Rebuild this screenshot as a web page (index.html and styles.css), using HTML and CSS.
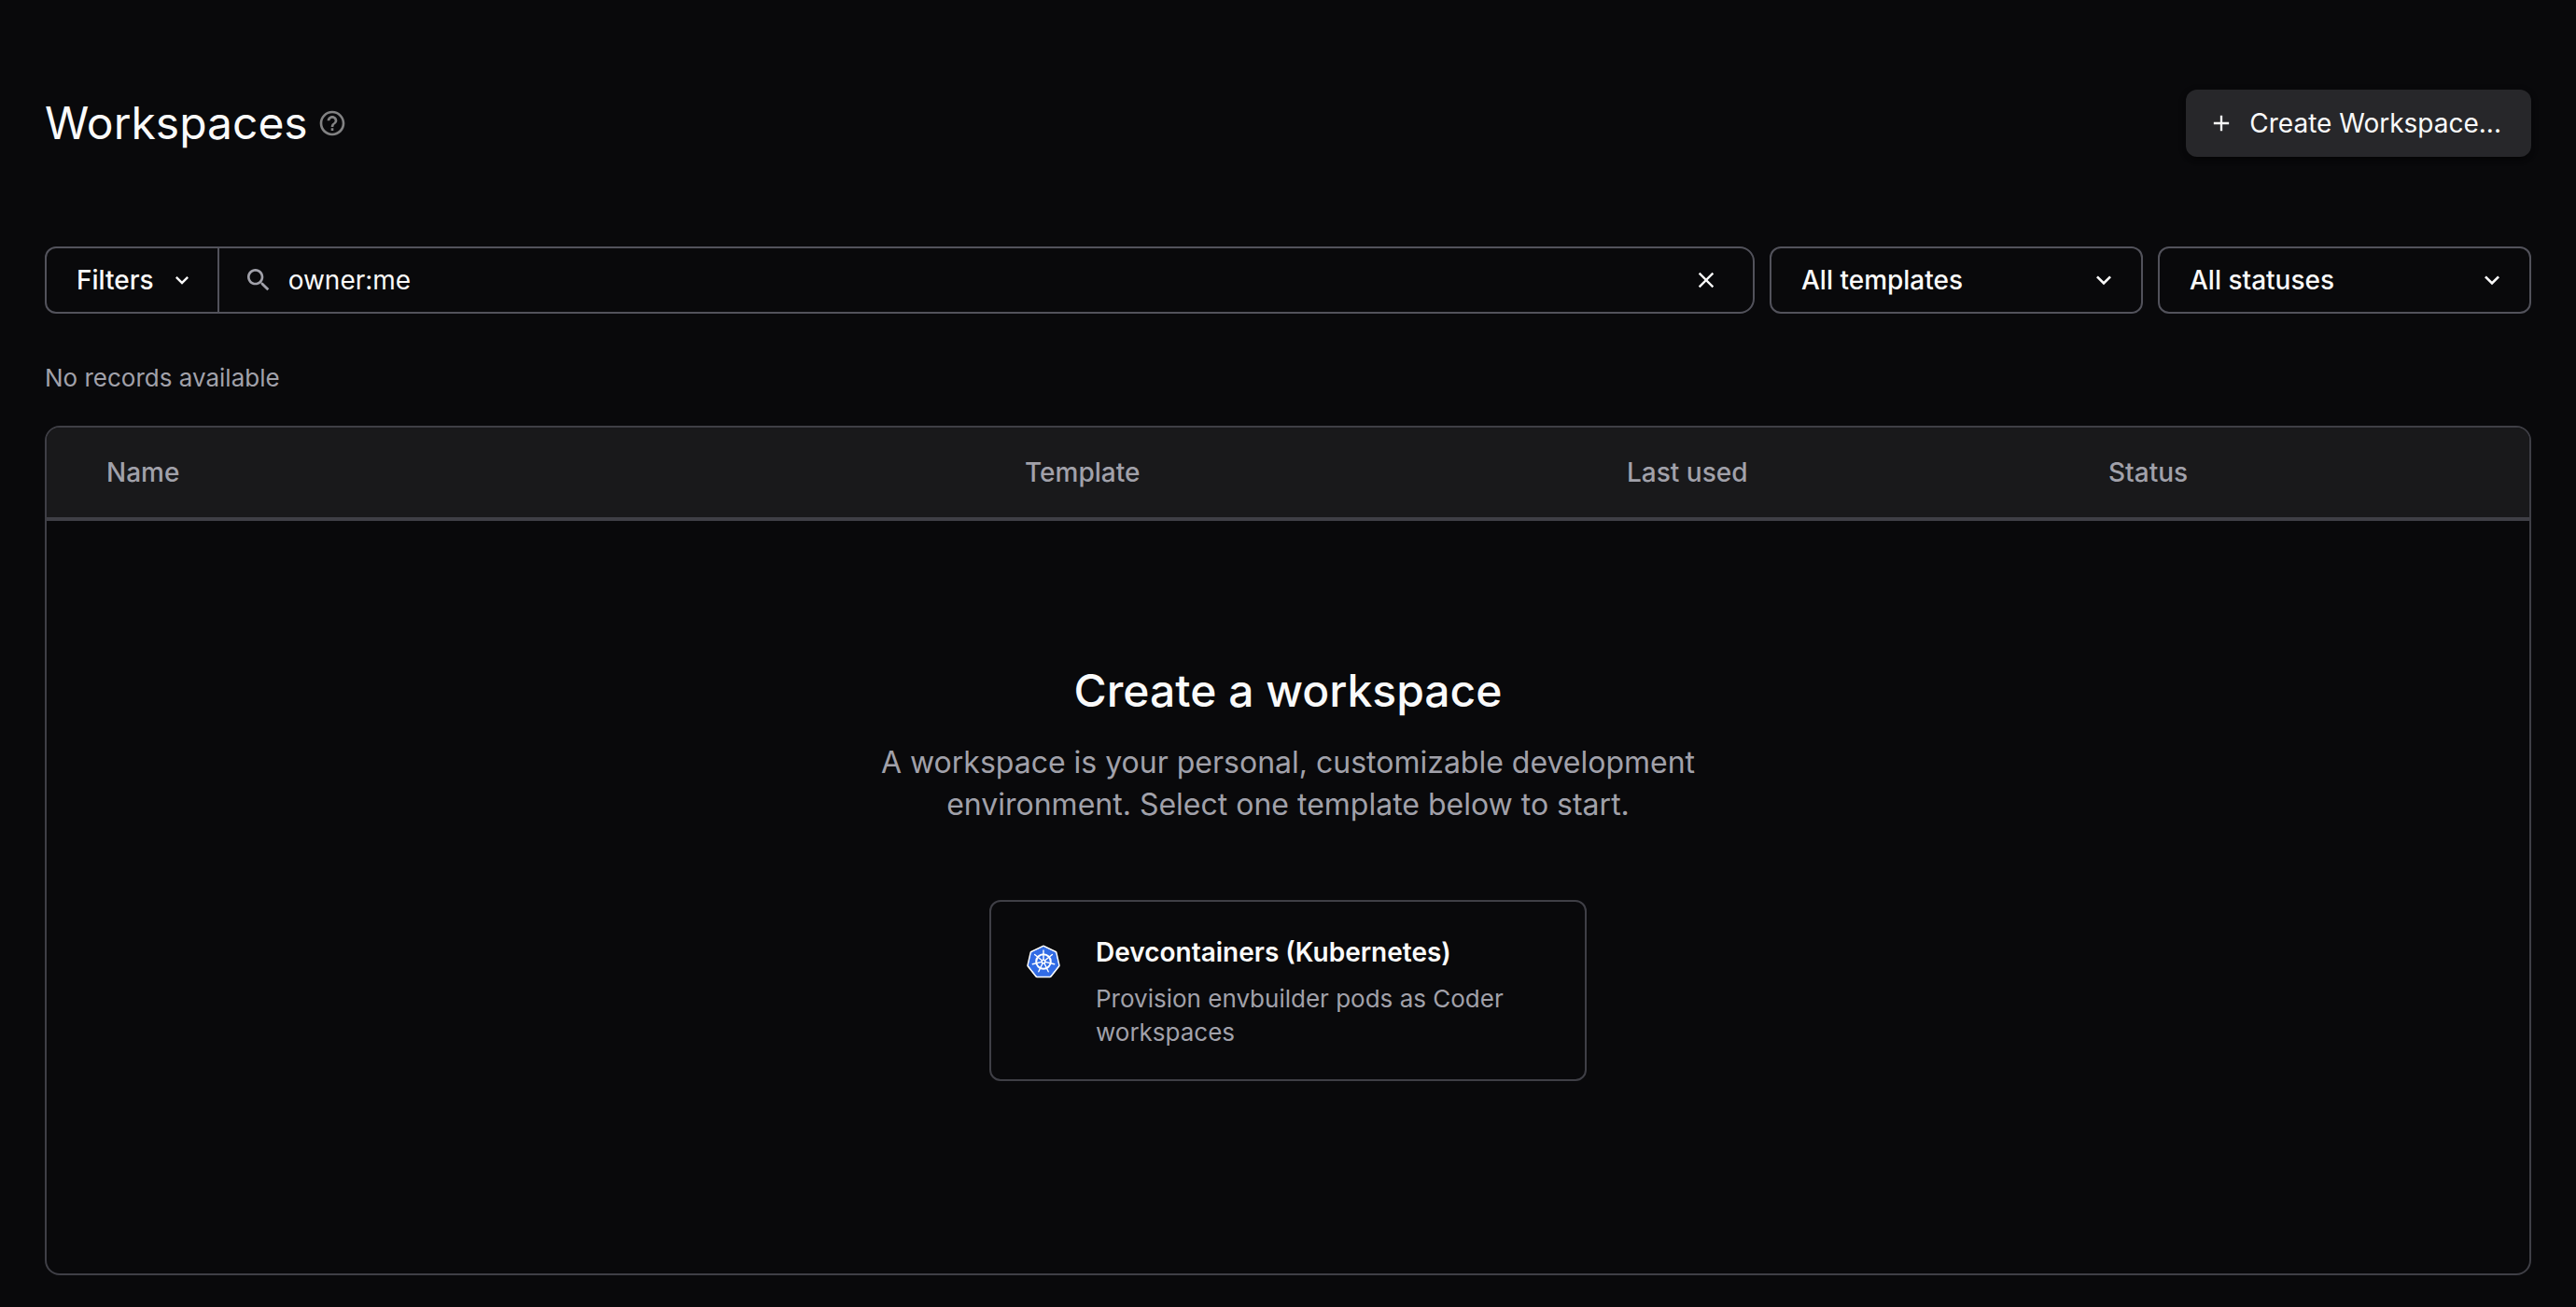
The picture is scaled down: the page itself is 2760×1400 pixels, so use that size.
FILE: index.html
```html
<!DOCTYPE html>
<html lang="en">
<head>
<meta charset="utf-8">
<meta name="viewport" content="width=device-width, initial-scale=1">
<title>Workspaces</title>
<link rel="stylesheet" href="styles.css">
</head>
<body>
<main class="page">
  <header class="page-header">
    <div class="title-group">
      <h1 class="page-title">Workspaces</h1>
      <button class="icon-button help" type="button" aria-label="More info">
        <svg class="icon-lg" viewBox="0 0 24 24" aria-hidden="true"><path d="M11 18h2v-2h-2v2zm1-16C6.48 2 2 6.48 2 12s4.48 10 10 10 10-4.48 10-10S17.52 2 12 2zm0 18c-4.41 0-8-3.59-8-8s3.59-8 8-8 8 3.59 8 8-3.59 8-8 8zm0-14c-2.21 0-4 1.79-4 4h2c0-1.1.9-2 2-2s2 .9 2 2c0 2-3 1.75-3 5h2c0-2.25 3-2.5 3-5 0-2.21-1.79-4-4-4z"/></svg>
      </button>
    </div>
    <button class="create-button" type="button">
      <svg class="icon-md" viewBox="0 0 24 24" aria-hidden="true"><path d="M19 13h-6v6h-2v-6H5v-2h6V5h2v6h6v2z"/></svg>
      Create Workspace...
    </button>
  </header>

  <div class="filters">
    <div class="search-group">
      <button class="filters-button" type="button">
        Filters
        <svg class="icon-md" viewBox="0 0 24 24" aria-hidden="true"><path d="M7.41 8.59 12 13.17l4.59-4.58L18 10l-6 6-6-6 1.41-1.41z"/></svg>
      </button>
      <div class="search-field">
        <svg class="icon-lg search-icon" viewBox="0 0 24 24" aria-hidden="true"><path d="M15.5 14h-.79l-.28-.27C15.41 12.59 16 11.11 16 9.5 16 5.91 13.09 3 9.5 3S3 5.91 3 9.5 5.91 16 9.5 16c1.61 0 3.09-.59 4.23-1.57l.27.28v.79l5 4.99L20.49 19l-4.99-5zm-6 0C7.01 14 5 11.99 5 9.5S7.01 5 9.5 5 14 7.01 14 9.5 11.99 14 9.5 14z"/></svg>
        <input class="search-input" type="text" value="owner:me" aria-label="Filter">
        <button class="icon-button" type="button" aria-label="Clear search">
          <svg class="icon-md" viewBox="0 0 24 24" aria-hidden="true"><path d="M19 6.41 17.59 5 12 10.59 6.41 5 5 6.41 10.59 12 5 17.59 6.41 19 12 13.41 17.59 19 19 17.59 13.41 12z"/></svg>
        </button>
      </div>
    </div>
    <div class="select-field">
      <select class="select" aria-label="Template"><option>All templates</option></select>
      <svg class="icon-lg select-arrow" viewBox="0 0 24 24" aria-hidden="true"><path d="M7.41 8.59 12 13.17l4.59-4.58L18 10l-6 6-6-6 1.41-1.41z"/></svg>
    </div>
    <div class="select-field">
      <select class="select" aria-label="Status"><option>All statuses</option></select>
      <svg class="icon-lg select-arrow" viewBox="0 0 24 24" aria-hidden="true"><path d="M7.41 8.59 12 13.17l4.59-4.58L18 10l-6 6-6-6 1.41-1.41z"/></svg>
    </div>
  </div>

  <p class="summary">No records available</p>

  <div class="table-frame">
    <table class="table">
      <colgroup><col class="col-name"><col class="col-template"><col class="col-used"><col class="col-status"></colgroup>
      <thead>
        <tr><th scope="col">Name</th><th scope="col">Template</th><th scope="col">Last used</th><th scope="col">Status</th></tr>
      </thead>
      <tbody>
        <tr>
          <td colspan="4">
            <div class="empty">
              <h2 class="empty-title">Create a workspace</h2>
              <p class="empty-text">A workspace is your personal, customizable development environment. Select one template below to start.</p>
              <a class="template-card" href="#devcontainers">
                <svg class="template-logo" viewBox="-24 -24 48 48" aria-hidden="true">
                  <path d="M0-15.5 12.6-9.4 15.7 4.2 7 15.2H-7L-15.7 4.2-12.6-9.4Z" fill="#326ce5" stroke="#fff" stroke-width="4" stroke-linejoin="round"/>
                  <path d="M0-15.5 12.6-9.4 15.7 4.2 7 15.2H-7L-15.7 4.2-12.6-9.4Z" fill="#326ce5" stroke="#326ce5" stroke-width="1" stroke-linejoin="round"/>
                  <g fill="none" stroke="#fff" stroke-width="1.4" stroke-linecap="round">
                    <circle r="7.8" stroke-width="2"/>
                    <path d="M0-2V-12M1.6-1.2 9.4-7.5M1.9.4 11.7 2.7M.9 1.8 5.2 10.8M-.9 1.8-5.2 10.8M-1.9.4-11.7 2.7M-1.6-1.2-9.4-7.5"/>
                    <circle r="1.8"/>
                  </g>
                </svg>
                <span class="template-body">
                  <span class="template-name">Devcontainers (Kubernetes)</span>
                  <span class="template-text">Provision envbuilder pods as Coder workspaces</span>
                </span>
              </a>
            </div>
          </td>
        </tr>
      </tbody>
    </table>
  </div>
</main>
</body>
</html>
```
FILE: styles.css
```css
* {
  box-sizing: border-box;
}

body {
  margin: 0;
  background: #09090b;
  color: #fafafa;
  font-family: Inter, "Liberation Sans", sans-serif;
  font-size: 28px;
  line-height: 43px;
}

h1, h2, p {
  margin: 0;
  font-weight: 400;
}

button, input, select {
  margin: 0;
  padding: 0;
  border: 0;
  background: none;
  color: inherit;
  font: inherit;
}

svg {
  display: block;
  flex: none;
  fill: currentColor;
}

.icon-md {
  width: 28px;
  height: 28px;
}

.icon-lg {
  width: 32px;
  height: 32px;
}

.page {
  padding: 96px 48px 34px;
}

.page-header {
  display: flex;
  align-items: center;
  justify-content: space-between;
  margin-bottom: 96px;
}

.title-group {
  display: flex;
  align-items: center;
  gap: 10px;
}

.page-title {
  font-size: 48px;
  line-height: 72px;
}

.icon-button {
  display: flex;
}

.help {
  color: #828283;
}

.create-button {
  display: flex;
  align-items: center;
  gap: 16px;
  height: 72px;
  padding: 0 32px 0 24px;
  border-radius: 12px;
  background: #27272a;
  box-shadow: 0 6px 2px -4px rgb(0 0 0 / 20%), 0 4px 4px rgb(0 0 0 / 14%), 0 2px 10px rgb(0 0 0 / 12%);
}

.filters {
  display: flex;
  gap: 16px;
}

.search-group {
  display: flex;
  flex: 1;
  height: 72px;
  border: 2px solid #52525b;
  border-radius: 12px 16px 16px 12px;
}

.filters-button {
  display: flex;
  align-items: center;
  gap: 16px;
  padding: 0 24px 0 32px;
  border-right: 2px solid #52525b;
  font-weight: 500;
}

.search-field {
  display: flex;
  flex: 1;
  align-items: center;
  gap: 16px;
  padding: 0 36px 0 26px;
}

.search-icon {
  color: #a1a1aa;
}

.search-input {
  flex: 1;
  min-width: 0;
  outline: none;
}

.select-field {
  position: relative;
  width: 400px;
}

.select {
  display: block;
  width: 100%;
  height: 72px;
  padding: 0 72px 0 32px;
  border: 2px solid #52525b;
  border-radius: 12px;
  appearance: none;
  font-weight: 500;
}

.select-arrow {
  position: absolute;
  top: 20px;
  right: 26px;
  pointer-events: none;
}

.summary {
  padding: 48px 0 30px;
  color: #a1a1aa;
  font-size: 26px;
  line-height: 42px;
}

.table-frame {
  overflow: hidden;
  border: 2px solid #3f3f46;
  border-radius: 16px;
}

.table {
  width: 100%;
  table-layout: fixed;
  border-collapse: separate;
  border-spacing: 0;
}

.col-name {
  width: 1032px;
}

.col-template {
  width: 645px;
}

.col-used {
  width: 516px;
}

.table th {
  height: 100px;
  padding: 0 16px;
  border-bottom: 4px solid #3f3f46;
  background: #19191b;
  color: #a1a1aa;
  font-weight: 500;
  text-align: left;
}

.table th:first-child {
  padding-left: 64px;
}

.table td {
  padding: 0;
}

.empty {
  display: flex;
  flex-direction: column;
  align-items: center;
  padding: 152px 80px 206px;
  text-align: center;
}

.empty-title {
  font-size: 48px;
  font-weight: 500;
  line-height: 60px;
}

.empty-text {
  max-width: 920px;
  margin: 24px 0 80px;
  color: #a1a1aa;
  font-size: 32px;
  line-height: 45px;
}

.template-card {
  display: flex;
  gap: 32px;
  width: 640px;
  padding: 32px;
  border: 2px solid #3f3f46;
  border-radius: 12px;
  color: inherit;
  text-align: left;
  text-decoration: none;
}

.template-logo {
  width: 48px;
  height: 48px;
  margin-top: 8px;
}

.template-body {
  display: flex;
  flex-direction: column;
  gap: 10px;
}

.template-name {
  font-weight: 600;
  line-height: 44px;
}

.template-text {
  color: #a1a1aa;
  font-size: 26px;
  line-height: 36px;
}
```
